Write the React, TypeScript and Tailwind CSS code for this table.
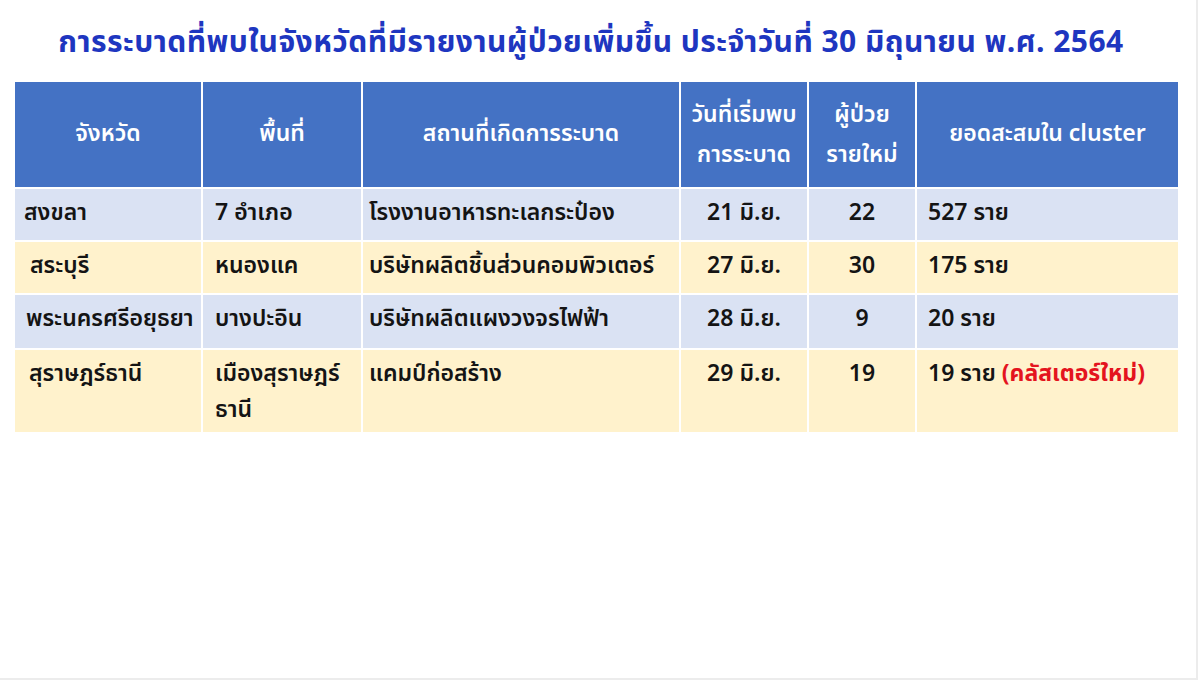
import React from "react";

const rows = [
  { p: "สงขลา", pl: "pl-[9px]", a: ["7 อำเภอ"], s: "โรงงานอาหารทะเลกระป๋อง", d: "21 มิ.ย.", n: "22", c: "527 ราย", red: "", bg: "bg-[#dae2f3]", h: "h-[53px]" },
  { p: "สระบุรี", pl: "pl-[15px]", a: ["หนองแค"], s: "บริษัทผลิตชิ้นส่วนคอมพิวเตอร์", d: "27 มิ.ย.", n: "30", c: "175 ราย", red: "", bg: "bg-[#fff2cc]", h: "h-[53px]" },
  { p: "พระนครศรีอยุธยา", pl: "pl-[11px]", a: ["บางปะอิน"], s: "บริษัทผลิตแผงวงจรไฟฟ้า", d: "28 มิ.ย.", n: "9", c: "20 ราย", red: "", bg: "bg-[#dae2f3]", h: "h-[55px]" },
  { p: "สุราษฎร์ธานี", pl: "pl-[14px]", a: ["เมืองสุราษฎร์", "ธานี"], s: "แคมป์ก่อสร้าง", d: "29 มิ.ย.", n: "19", c: "19 ราย", red: "(คลัสเตอร์ใหม่)", bg: "bg-[#fff2cc]", h: "h-[84px]" },
];

export default function App() {
  const font = { fontFamily: '"Noto Sans Thai", Tahoma, "Noto Sans", "DejaVu Sans", sans-serif' };
  return (
    <div className="w-[1200px] h-[681px] bg-white" style={font}>
      <div className="w-[1198px] h-[680px] border-r-2 border-b-2 border-[#ececec] bg-white">
        <div className="h-[82px] flex items-center justify-center pt-[4px]">
          <h1 className="text-[30px] font-bold text-[#1e36c0] tracking-[0.45px] leading-none whitespace-nowrap pr-[14px]">
            การระบาดที่พบในจังหวัดที่มีรายงานผู้ป่วยเพิ่มขึ้น ประจำวันที่ 30 มิถุนายน พ.ศ. 2564
          </h1>
        </div>
        <div className="pl-[15px]">
          <table className="border-collapse w-[1163px] table-fixed text-[23px] font-semibold text-[#141414]">
            <colgroup>
              <col className="w-[187px]" />
              <col className="w-[160px]" />
              <col className="w-[318px]" />
              <col className="w-[128px]" />
              <col className="w-[108px]" />
              <col className="w-[262px]" />
            </colgroup>
            <thead>
              <tr className="h-[106px] bg-[#4472c4] text-white">
                <th className="border-2 border-white border-t-0 border-l-0 font-semibold text-center align-middle">จังหวัด</th>
                <th className="border-2 border-white border-t-0 font-semibold text-center align-middle">พื้นที่</th>
                <th className="border-2 border-white border-t-0 font-semibold text-center align-middle">สถานที่เกิดการระบาด</th>
                <th className="border-2 border-white border-t-0 font-semibold text-center align-middle leading-[40px] whitespace-nowrap">วันที่เริ่มพบ<br />การระบาด</th>
                <th className="border-2 border-white border-t-0 font-semibold text-center align-middle leading-[40px]">ผู้ป่วย<br />รายใหม่</th>
                <th className="border-2 border-white border-t-0 border-r-0 font-semibold text-center align-middle whitespace-nowrap">ยอดสะสมใน cluster</th>
              </tr>
            </thead>
            <tbody>
              {rows.map((r, i) => (
                <tr key={i} className={`${r.bg} ${r.h}`}>
                  <td className={`border-2 border-white border-l-0 align-top pt-[6px] ${r.pl} leading-[36px] whitespace-nowrap`}>{r.p}</td>
                  <td className="border-2 border-white align-top pt-[6px] pl-[12px] leading-[36px] whitespace-nowrap">
                    {r.a.map((x, j) => (
                      <div key={j}>{x}</div>
                    ))}
                  </td>
                  <td className="border-2 border-white align-top pt-[6px] pl-[6px] leading-[36px] whitespace-nowrap">{r.s}</td>
                  <td className="border-2 border-white align-top pt-[6px] text-center leading-[36px] whitespace-nowrap">{r.d}</td>
                  <td className="border-2 border-white align-top pt-[6px] text-center leading-[36px]">{r.n}</td>
                  <td className="border-2 border-white border-r-0 align-top pt-[6px] pl-[11px] leading-[36px] whitespace-nowrap">
                    {r.c}
                    {r.red && <span className="text-[#e4141e] font-bold"> {r.red}</span>}
                  </td>
                </tr>
              ))}
            </tbody>
          </table>
        </div>
      </div>
    </div>
  );
}
